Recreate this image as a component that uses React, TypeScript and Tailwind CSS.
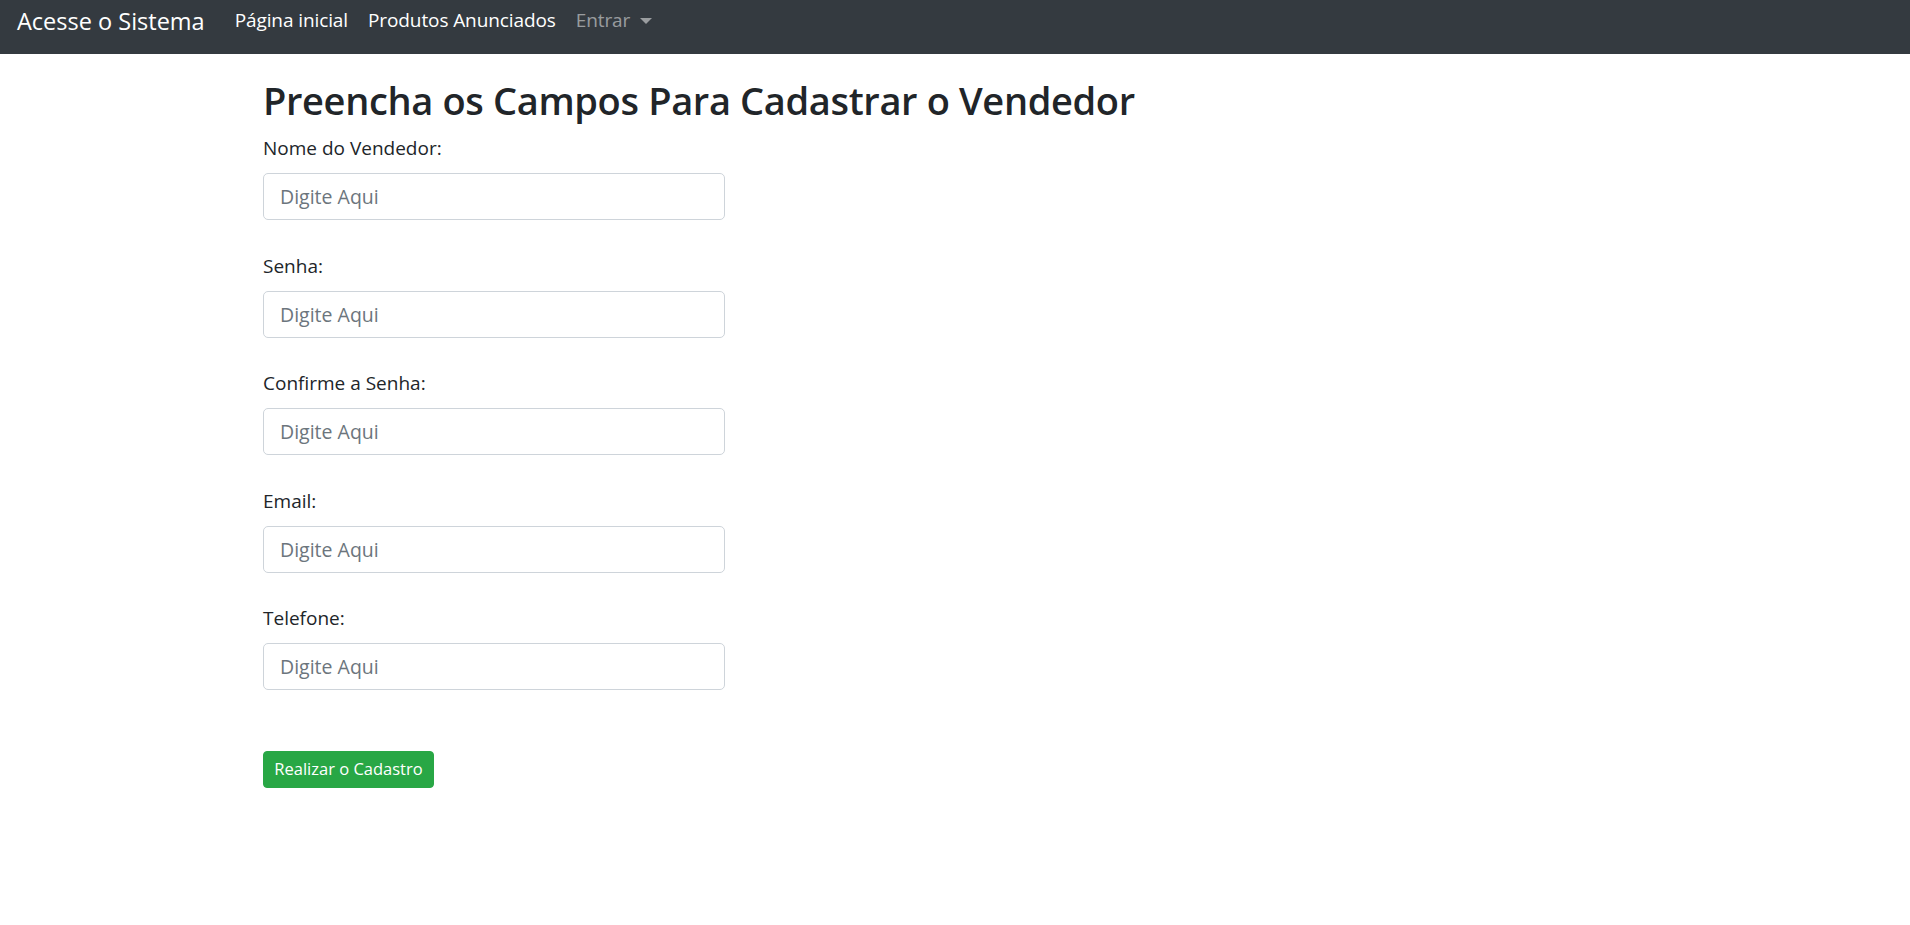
import { useState } from 'react';

const fields = [
  { id: 'nome', label: 'Nome do Vendedor:', type: 'text' },
  { id: 'senha', label: 'Senha:', type: 'password' },
  { id: 'confirma', label: 'Confirme a Senha:', type: 'password' },
  { id: 'email', label: 'Email:', type: 'email' },
  { id: 'telefone', label: 'Telefone:', type: 'tel' },
];

const NavBar = () => (
  <nav className="h-[54px] bg-[#343a40] flex items-start pl-[17px]">
    <a href="#" className="text-[23.5px] leading-[37.5px] mt-[3px] text-white">
      Acesse o Sistema
    </a>
    <ul className="flex ml-[20px] mt-[5px] text-[19px] leading-[30px] tracking-[-0.1px]">
      <li className="px-[10px]">
        <a href="#" className="text-white">Página inicial</a>
      </li>
      <li className="px-[10px]">
        <a href="#" className="text-white">Produtos Anunciados</a>
      </li>
      <li className="px-[10px]">
        <a href="#" className="text-white/50 flex items-center">
          Entrar
          <span className="ml-[10px] mt-[1px] w-0 h-0 border-l-[6px] border-r-[6px] border-t-[6px] border-l-transparent border-r-transparent border-t-white/50" />
        </a>
      </li>
    </ul>
  </nav>
);

const App = () => {
  const [values, setValues] = useState<Record<string, string>>({});

  return (
    <div className="min-h-screen bg-white text-[#212529] font-['Open_Sans',sans-serif]">
      <NavBar />
      <main className="pl-[263px] pt-[20px]">
        <h2 className="text-[38px] leading-[48px] font-semibold tracking-[-0.35px] pt-[2px] mb-[9px]">
          Preencha os Campos Para Cadastrar o Vendedor
        </h2>
        <form className="w-[462px]" onSubmit={(e) => e.preventDefault()}>
          {fields.map((f) => (
            <div key={f.id} className="mb-[30.5px]">
              <label htmlFor={f.id} className="block text-[19px] leading-[30px] mb-[10px]">
                {f.label}
              </label>
              <input
                id={f.id}
                type={f.type}
                placeholder="Digite Aqui"
                value={values[f.id] || ''}
                onChange={(e) => setValues({ ...values, [f.id]: e.target.value })}
                className="block w-full h-[47px] border border-[#ced4da] rounded-[5px] px-[16px] text-[19.5px] text-[#495057] placeholder:text-[#6c757d] outline-none"
              />
            </div>
          ))}
          <button
            type="submit"
            className="mt-[30px] w-[171px] h-[37px] bg-[#28a745] text-white text-[16.5px] rounded-[4px] border border-[#28a745]"
          >
            Realizar o Cadastro
          </button>
        </form>
      </main>
    </div>
  );
};

export default App;
